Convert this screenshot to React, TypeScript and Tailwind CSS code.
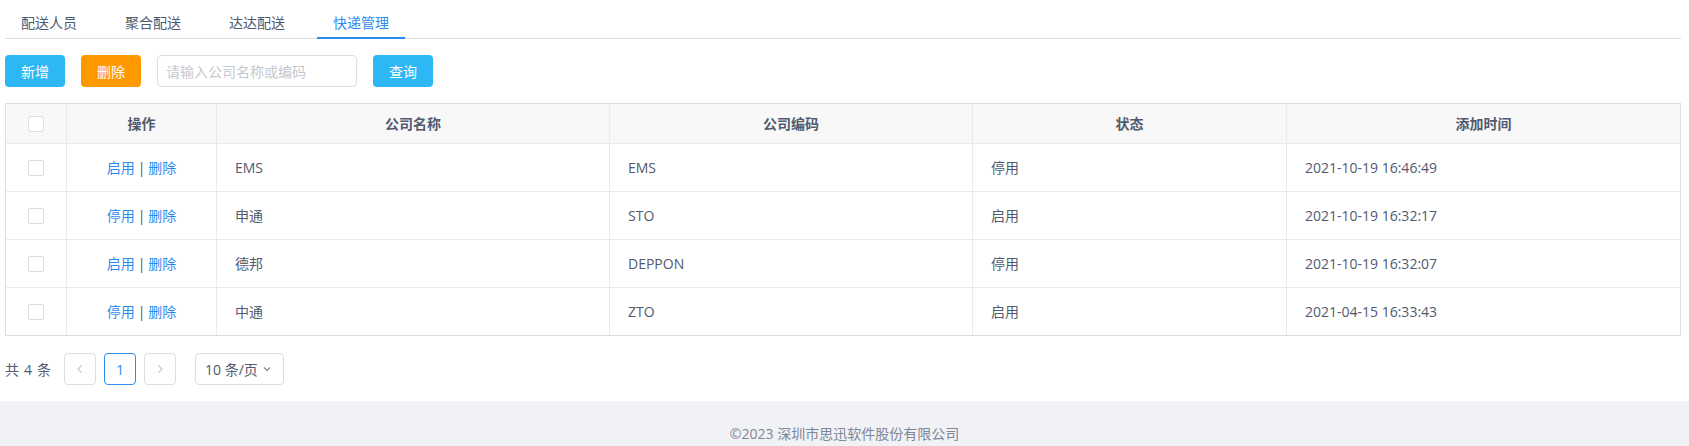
import * as React from "react";

interface Company {
    name: string;
    code: string;
    enabled: boolean;
    createdAt: string;
}

const companies: Company[] = [
    {name: "EMS", code: "EMS", enabled: false, createdAt: "2021-10-19 16:46:49"},
    {name: "申通", code: "STO", enabled: true, createdAt: "2021-10-19 16:32:17"},
    {name: "德邦", code: "DEPPON", enabled: false, createdAt: "2021-10-19 16:32:07"},
    {name: "中通", code: "ZTO", enabled: true, createdAt: "2021-04-15 16:33:43"},
];

const tabs = ["配送人员", "聚合配送", "达达配送", "快递管理"];

const gridCols = "grid grid-cols-[61px_150px_393px_363px_314px_1fr]";

const Checkbox: React.FC = () => (
    <span className="inline-block w-4 h-4 rounded-[2px] border border-[#dcdee2] bg-white" />
);

const App: React.FC = () => {
    const [activeTab, setActiveTab] = React.useState(3);

    return (
        <div className="min-h-screen bg-white text-[14px] text-[#515a6e] font-['Open_Sans','Noto_Sans_CJK_SC',sans-serif] flex flex-col">
            <div className="pl-[5px] pr-[8px] pb-4">
                {/* tabs */}
                <div className="flex border-b border-[#dcdee2]">
                    {tabs.map((tab, i) => (
                        <div
                            key={tab}
                            onClick={() => setActiveTab(i)}
                            className={`relative h-[38px] px-4 mr-4 pt-[12px] leading-[21px] cursor-pointer ${
                                i === activeTab ? "text-[#2d8cf0]" : "text-[#515a6e]"
                            }`}
                        >
                            {tab}
                            {i === activeTab && (
                                <span className="absolute left-0 right-0 bottom-[-1px] h-[2px] bg-[#2d8cf0]" />
                            )}
                        </div>
                    ))}
                </div>

                {/* toolbar */}
                <div className="mt-4 flex items-center gap-4">
                    <button className="h-8 w-[60px] rounded bg-[#2db7f5] text-white">新增</button>
                    <button className="h-8 w-[60px] rounded bg-[#ff9900] text-white">删除</button>
                    <input
                        className="h-8 w-[200px] rounded border border-[#dcdee2] px-[8px] outline-none placeholder:text-[#c5c8ce]"
                        placeholder="请输入公司名称或编码"
                    />
                    <button className="h-8 w-[60px] rounded bg-[#2db7f5] text-white">查询</button>
                </div>

                {/* table */}
                <div className="mt-4 border border-[#dcdee2]">
                    <div className={`${gridCols} h-[40px] bg-[#f8f8f9] border-b border-[#e8eaec] font-bold`}>
                        <div className="flex items-center justify-center border-r border-[#e8eaec]">
                            <Checkbox />
                        </div>
                        <div className="flex items-center justify-center border-r border-[#e8eaec]">操作</div>
                        <div className="flex items-center justify-center border-r border-[#e8eaec]">公司名称</div>
                        <div className="flex items-center justify-center border-r border-[#e8eaec]">公司编码</div>
                        <div className="flex items-center justify-center border-r border-[#e8eaec]">状态</div>
                        <div className="flex items-center justify-center">添加时间</div>
                    </div>
                    {companies.map((c, idx) => (
                        <div
                            key={c.code}
                            className={`${gridCols} ${
                                idx < companies.length - 1 ? "h-[48px] border-b border-[#e8eaec]" : "h-[47px]"
                            }`}
                        >
                            <div className="flex items-center justify-center border-r border-[#e8eaec]">
                                <Checkbox />
                            </div>
                            <div className="flex items-center justify-center border-r border-[#e8eaec]">
                                <a className="text-[#2d8cf0] cursor-pointer">{c.enabled ? "停用" : "启用"}</a>
                                <span className="px-[3px]">|</span>
                                <a className="text-[#2d8cf0] cursor-pointer">删除</a>
                            </div>
                            <div className="flex items-center px-[18px] border-r border-[#e8eaec]">{c.name}</div>
                            <div className="flex items-center px-[18px] border-r border-[#e8eaec]">{c.code}</div>
                            <div className="flex items-center px-[18px] border-r border-[#e8eaec]">
                                {c.enabled ? "启用" : "停用"}
                            </div>
                            <div className="flex items-center px-[18px]">{c.createdAt}</div>
                        </div>
                    ))}
                </div>

                {/* pagination */}
                <div className="mt-[17px] flex items-center h-8">
                    <span className="mr-[14px] flex items-center gap-[5px] w-[45px]">
                        <span>共</span>
                        <span>4</span>
                        <span>条</span>
                    </span>
                    <div className="flex gap-2">
                        <button className="w-8 h-8 rounded border border-[#dcdee2] flex items-center justify-center text-[#c5c8ce]">
                            <svg width="10" height="10" viewBox="0 0 10 10" fill="none" stroke="currentColor" strokeWidth="1.2">
                                <path d="M6.5 1.5 L3 5 L6.5 8.5" />
                            </svg>
                        </button>
                        <button className="w-8 h-8 rounded border border-[#2d8cf0] text-[#2d8cf0]">1</button>
                        <button className="w-8 h-8 rounded border border-[#dcdee2] flex items-center justify-center text-[#c5c8ce]">
                            <svg width="10" height="10" viewBox="0 0 10 10" fill="none" stroke="currentColor" strokeWidth="1.2">
                                <path d="M3.5 1.5 L7 5 L3.5 8.5" />
                            </svg>
                        </button>
                    </div>
                    <div className="ml-[19px] h-8 w-[89px] rounded border border-[#dcdee2] flex items-center pl-[9px]">
                        <span>10 条/页</span>
                        <svg className="ml-[4px] text-[#808695]" width="10" height="10" viewBox="0 0 10 10" fill="none" stroke="currentColor" strokeWidth="1.2">
                            <path d="M2 3.5 L5 6.5 L8 3.5" />
                        </svg>
                    </div>
                </div>
            </div>

            {/* footer */}
            <div className="flex-1 bg-[#f0f2f5] pt-[22px] pb-6 text-center text-[#808695] leading-[21px]">
                ©2023 深圳市思迅软件股份有限公司
            </div>
        </div>
    );
};

export default App;
